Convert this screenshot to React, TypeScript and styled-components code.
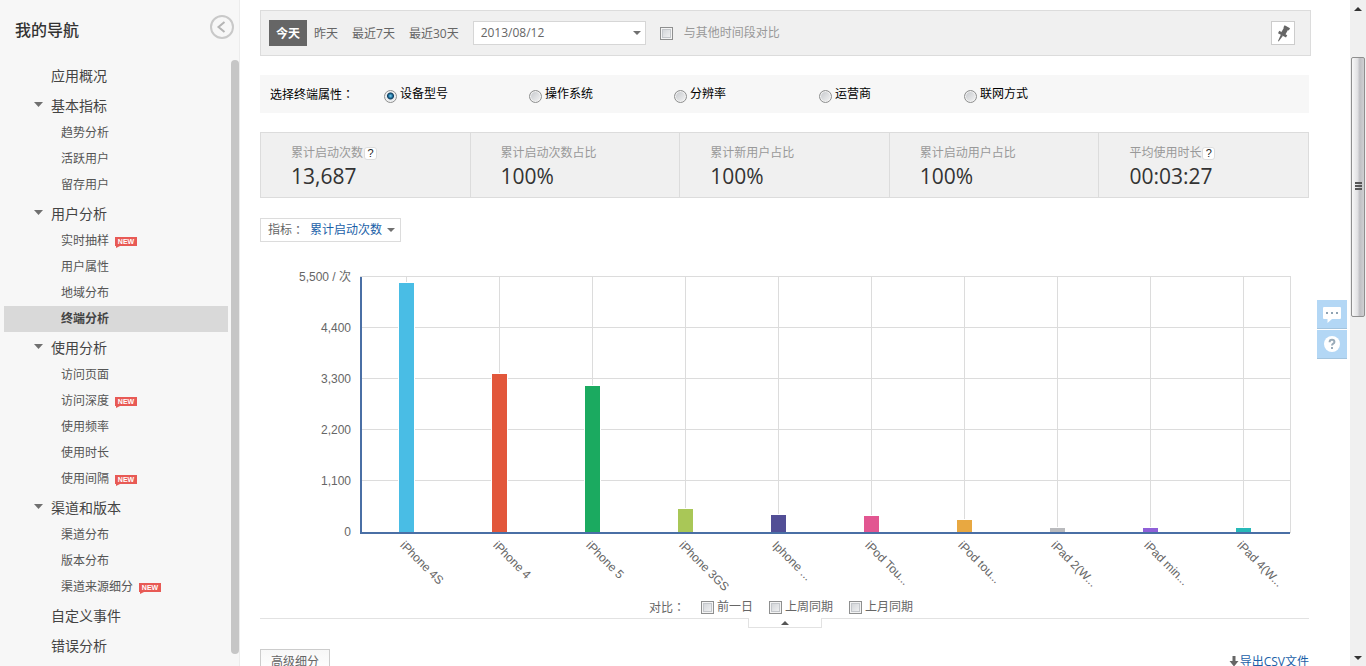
import React, { useState } from 'react';
import styled, { createGlobalStyle } from 'styled-components';

const FONT = '"Open Sans", "Noto Sans CJK SC", sans-serif';
const CHART_FONT = '"Liberation Sans", "Noto Sans CJK SC", sans-serif';

const GlobalStyle = createGlobalStyle`
  *, *::before, *::after { box-sizing: border-box; }
  body { margin: 0; background: #fff; color: #666; font: 12px/18px ${FONT}; }
  button, select, input { font: inherit; color: inherit; margin: 0; }
  a { text-decoration: none; color: inherit; }
  ul { list-style: none; margin: 0; padding: 0; }
`;

const Page = styled.div`
  display: flex;
  height: 100vh;
  overflow: hidden;
`;

/* Sidebar */
const Sidebar = styled.aside`
  flex: 0 0 240px;
  display: flex;
  flex-direction: column;
  background: #f7f7f7;
  border-right: 1px solid #ececec;
`;

const SidebarHead = styled.header`
  flex: 0 0 60px;
  display: flex;
  align-items: flex-start;
  justify-content: space-between;
  padding: 15px 5px 0 15px;
`;

const SidebarTitle = styled.h1`
  margin: 3px 0 0;
  font-size: 16px;
  line-height: 24px;
  font-weight: 500;
  color: #333;
`;

const IconButton = styled.button`
  display: block;
  padding: 0;
  border: 0;
  background: none;
  line-height: 0;
  cursor: pointer;
`;

const SidebarBody = styled.div`
  flex: 1;
  display: flex;
  justify-content: space-between;
  min-height: 0;
`;

const Nav = styled.nav`
  flex: 1;
  padding: 0 2px 0 4px;
  overflow: hidden;
`;

const GroupLink = styled.a`
  display: flex;
  align-items: center;
  height: 30px;
  padding: 2px 0 0 30px;
  font-size: 14px;
  color: #444;
`;

const Caret = styled.svg`
  flex: none;
  display: block;
  width: 9px;
  height: 5px;
  fill: #707070;
`;

const CaretSlot = styled.span`
  width: 17px;
  height: 8px;
`;

const SubLink = styled.a<{ $active?: boolean }>`
  display: flex;
  align-items: center;
  gap: 6px;
  height: 26px;
  margin-right: 1px;
  padding-left: 57px;
  color: ${(p) => (p.$active ? '#444' : '#555')};
  font-weight: ${(p) => (p.$active ? 700 : 400)};
  background: ${(p) => (p.$active ? '#d9d9d9' : 'transparent')};
`;

const Badge = styled.span`
  position: relative;
  width: 22px;
  height: 9px;
  background: #e85a55;
  color: #fff;
  font: 700 7px/9px "Liberation Sans", sans-serif;
  text-align: center;
  &::after {
    content: '';
    position: absolute;
    left: 1px;
    top: 9px;
    border-top: 2px solid #e85a55;
    border-right: 4px solid transparent;
  }
`;

const NavThumb = styled.div`
  flex: none;
  width: 8px;
  margin-bottom: 12px;
  border-radius: 4px;
  background: #c6c6c6;
`;

/* Main column */
const Main = styled.main`
  flex: 1;
  min-width: 0;
  padding: 10px 41px 0 20px;
`;

/* Full-width colon set in the middle of its cell */
const Colon = styled.span`
  font-family: "Noto Sans CJK TC", sans-serif;
`;

const Toolbar = styled.div`
  display: flex;
  align-items: center;
  height: 46px;
  margin-right: -2px;
  padding: 0 15px 0 8px;
  border: 1px solid #dcdcdc;
  background: #f0f0f0;
`;

const RangeButton = styled.button<{ $active?: boolean }>`
  height: 26px;
  padding: 2px 7px 0;
  border: 0;
  background: ${(p) => (p.$active ? '#666' : 'transparent')};
  color: ${(p) => (p.$active ? '#fff' : '#666')};
  font-weight: ${(p) => (p.$active ? 700 : 400)};
  cursor: pointer;
`;

const SelectWrap = styled.span`
  display: inline-flex;
  align-items: center;
  position: relative;
`;

const SelectCaret = styled(Caret)`
  position: absolute;
  right: 5px;
  width: 8px;
  height: 4px;
  pointer-events: none;
`;

const DateSelect = styled.select`
  appearance: none;
  width: 173px;
  height: 24px;
  padding: 0 20px 0 7px;
  border: 1px solid #d6d6d6;
  border-radius: 0;
  background: #fff;
`;

const DateWrap = styled(SelectWrap)`
  margin: 0 14px 0 7px;
`;

const Check = styled.input`
  appearance: none;
  flex: none;
  width: 13px;
  height: 13px;
  border: 1px solid #8e8f8f;
  background: linear-gradient(135deg, #cdd0d4, #f6f6f6);
  box-shadow: inset 0 0 0 1px #f4f4f4, inset 0 0 0 2px #c4c7cb;
  &:checked { background: #3a7ca8; }
`;

const CompareLabel = styled.label`
  display: flex;
  align-items: center;
  gap: 11px;
  color: #999;
`;

const PinButton = styled.button`
  display: flex;
  align-items: center;
  justify-content: center;
  width: 24px;
  height: 24px;
  margin-left: auto;
  padding: 0;
  border: 1px solid #ccc;
  background: #fff;
  cursor: pointer;
`;

const AttributeBar = styled.fieldset`
  display: flex;
  align-items: center;
  height: 38px;
  min-width: 0;
  margin: 19px 0;
  padding: 0 10px;
  border: 0;
  background: #f7f7f7;
  color: #000;
`;

const AttributeTitle = styled.span`
  width: 114px;
`;

const RadioLabel = styled.label`
  display: flex;
  align-items: center;
  gap: 3px;
  width: 145px;
`;

const Radio = styled.input`
  appearance: none;
  flex: none;
  width: 13px;
  height: 13px;
  margin-top: 4px;
  border: 1px solid #8e8f8f;
  border-radius: 50%;
  background: linear-gradient(135deg, #c4c7cb, #f4f4f4);
  box-shadow: inset 0 0 0 1px #f2f2f2;
  &:checked {
    background: radial-gradient(circle at 50% 45%, #7fd3f2 0, #1f6f9c 2px, #123c5c 3px, #e8ecef 4px);
  }
`;

const Stats = styled.dl`
  display: flex;
  height: 66px;
  margin: 0;
  border: 1px solid #dcdcdc;
  background: #f0f0f0;
`;

const Stat = styled.div`
  flex: 1;
  padding: 11px 0 0 30px;
  border-right: 1px solid #dcdcdc;
  &:last-child { border-right: 0; }
`;

const StatName = styled.dt`
  display: flex;
  align-items: center;
  color: #999;
`;

const StatValue = styled.dd`
  margin: 0;
  font-size: 21px;
  line-height: 28px;
  color: #333;
`;

const Help = styled.button`
  width: 13px;
  height: 13px;
  margin-left: 1px;
  padding: 0;
  border: 1px solid #ddd;
  border-radius: 3px;
  background: #fff;
  color: #222;
  font: 11px/11px "Liberation Sans", sans-serif;
`;

const MetricBox = styled.label`
  display: inline-flex;
  align-items: center;
  height: 24px;
  margin-top: 20px;
  padding-left: 7px;
  border: 1px solid #dcdcdc;
`;

const MetricSelect = styled.select`
  appearance: none;
  width: 90px;
  height: 22px;
  margin-left: 6px;
  padding: 0;
  border: 0;
  background: transparent;
  color: #1b5fa8;
`;

const ChartArea = styled.figure`
  margin: 34px 19px 0 100px;
`;

const ChartSvg = styled.svg`
  display: block;
  width: 100%;
  height: 321px;
  overflow: visible;
  font: 12px ${CHART_FONT};
  fill: #666;
`;

const CompareRow = styled.div`
  display: flex;
  align-items: center;
  justify-content: center;
  gap: 16px;
  height: 20px;
  padding-right: 7px;
`;

const OptionLabel = styled.label`
  display: flex;
  align-items: center;
  gap: 3px;
`;

const Divider = styled.div`
  display: flex;
  height: 10px;
  margin-top: 1px;
`;

const Rule = styled.span`
  flex: 1;
  border-top: 1px solid #e2e2e2;
`;

const FoldButton = styled.button`
  display: flex;
  align-items: center;
  justify-content: center;
  width: 74px;
  padding: 0;
  border: 1px solid #e2e2e2;
  border-top: 0;
  background: #fff;
`;

const FooterBar = styled.div`
  display: flex;
  align-items: flex-start;
  justify-content: space-between;
  margin-top: 21px;
`;

const SegmentButton = styled.button`
  width: 70px;
  height: 25px;
  padding: 0;
  border: 1px solid #ccc;
  background: linear-gradient(#f7f7f7, #fff);
`;

const ExportLink = styled.a`
  display: flex;
  align-items: center;
  gap: 1px;
  height: 25px;
  color: #1b5fa8;
`;

/* Window edge */
const Scrollbar = styled.div`
  flex: 0 0 16px;
  display: flex;
  flex-direction: column;
  align-items: center;
  padding: 7px 1px 6px;
  background: #f0f0f0;
`;

const ScrollThumb = styled.div`
  display: flex;
  align-items: center;
  justify-content: center;
  align-self: stretch;
  height: 39vh;
  margin: 46px 0 auto;
  border: 1px solid #8f8f8f;
  border-radius: 2px;
  background: linear-gradient(90deg, #f8f8f8, #e2e2e4 45%, #bfbfc3 65%, #d0d0d2);
`;

const FloatTools = styled.div`
  position: fixed;
  right: 19px;
  top: 300px;
  display: flex;
  flex-direction: column;
  gap: 1px;
`;

const FloatButton = styled.button`
  display: flex;
  align-items: center;
  justify-content: center;
  width: 30px;
  height: 29px;
  padding: 0;
  border: 0;
  border-bottom: 1px solid #a3c4de;
  background: #b3d7f5;
`;

type Item = { text: string; isNew?: boolean };
type Group = { text: string; items?: Item[] };

const NAV: Group[] = [
  { text: '应用概况' },
  { text: '基本指标', items: [{ text: '趋势分析' }, { text: '活跃用户' }, { text: '留存用户' }] },
  {
    text: '用户分析',
    items: [{ text: '实时抽样', isNew: true }, { text: '用户属性' }, { text: '地域分布' }, { text: '终端分析' }],
  },
  {
    text: '使用分析',
    items: [
      { text: '访问页面' },
      { text: '访问深度', isNew: true },
      { text: '使用频率' },
      { text: '使用时长' },
      { text: '使用间隔', isNew: true },
    ],
  },
  { text: '渠道和版本', items: [{ text: '渠道分布' }, { text: '版本分布' }, { text: '渠道来源细分', isNew: true }] },
  { text: '自定义事件' },
  { text: '错误分析' },
];

const RANGES = ['今天', '昨天', '最近7天', '最近30天'];
const ATTRIBUTES = ['设备型号', '操作系统', '分辨率', '运营商', '联网方式'];
const PERIODS = ['前一日', '上周同期', '上月同期'];

const STATS = [
  { name: '累计启动次数', value: '13,687', help: true },
  { name: '累计启动次数占比', value: '100%' },
  { name: '累计新用户占比', value: '100%' },
  { name: '累计启动用户占比', value: '100%' },
  { name: '平均使用时长', value: '00:03:27', help: true },
];

const DEVICES = [
  { name: 'iPhone 4S', value: 5370, color: '#49bde5' },
  { name: 'iPhone 4', value: 3400, color: '#e2573b' },
  { name: 'iPhone 5', value: 3150, color: '#1baa60' },
  { name: 'iPhone 3GS', value: 500, color: '#a9c757' },
  { name: 'Iphone ...', value: 370, color: '#524e96' },
  { name: 'iPod Tou...', value: 350, color: '#e25691' },
  { name: 'iPod tou...', value: 260, color: '#e8a841' },
  { name: 'iPad 2(W...', value: 95, color: '#b9babd' },
  { name: 'iPad min...', value: 95, color: '#8f60d8' },
  { name: 'iPad 4(W...', value: 95, color: '#27b9b8' },
];

const TICKS = ['5,500 / 次', '4,400', '3,300', '2,200', '1,100', '0'];
const STEP = 51;
const AXIS_Y = STEP * 5 + 2;
const BASE_Y = AXIS_Y - 1;

function DownCaret() {
  return (
    <Caret viewBox="0 0 9 5">
      <path d="M0 0H9L4.5 5Z" />
    </Caret>
  );
}

function Chart() {
  return (
    <ChartSvg role="img" aria-label="累计启动次数">
      <g stroke="#dcdcdc" shapeRendering="crispEdges">
        {TICKS.slice(0, 5).map((t, i) => (
          <line key={t} x1="0" x2="100%" y1={i * STEP + 0.5} y2={i * STEP + 0.5} />
        ))}
        <line x1="100%" x2="100%" y1="0" y2={AXIS_Y} />
      </g>
      {TICKS.map((t, i) => (
        <text key={t} x="-9" y={i * STEP + 5} textAnchor="end">
          {t}
        </text>
      ))}
      {DEVICES.map((d, i) => {
        const h = Math.round((d.value / 5500) * STEP * 5);
        return (
          <svg key={d.name} x={`${i * 10 + 5}%`} overflow="visible">
            <line x1="0" x2="0" y1="0" y2={BASE_Y} stroke="#dcdcdc" shapeRendering="crispEdges" />
            <rect x="-9" y={BASE_Y - h - 1} width="17" height={h + 1} fill="#fff" shapeRendering="crispEdges" />
            <rect x="-8" y={BASE_Y - h} width="15" height={h} fill={d.color} shapeRendering="crispEdges" />
            <text transform={`translate(-7 ${BASE_Y + 14}) rotate(45)`}>{d.name}</text>
          </svg>
        );
      })}
      <g stroke="#4a6fa5" strokeWidth="2">
        <line x1="1" x2="1" y1="1" y2={AXIS_Y} />
        <line x1="0" x2="100%" y1={AXIS_Y} y2={AXIS_Y} />
      </g>
    </ChartSvg>
  );
}

export default function App() {
  const [range, setRange] = useState('今天');
  const [attribute, setAttribute] = useState('设备型号');

  return (
    <Page>
      <GlobalStyle />
      <Sidebar>
        <SidebarHead>
          <SidebarTitle>我的导航</SidebarTitle>
          <IconButton aria-label="收起导航">
            <svg width="24" height="24" viewBox="0 0 24 24" fill="none" stroke="#c9c9c9" strokeWidth="2">
              <circle cx="12" cy="12" r="11" />
              <path d="M14.5 7L8.5 12L14.5 17" stroke="#b5b5b5" />
            </svg>
          </IconButton>
        </SidebarHead>
        <SidebarBody>
          <Nav>
            <ul>
              {NAV.map((g) => (
                <li key={g.text}>
                  <GroupLink href="#">
                    <CaretSlot>{g.items && <DownCaret />}</CaretSlot>
                    {g.text}
                  </GroupLink>
                  {g.items && (
                    <ul>
                      {g.items.map((s) => (
                        <li key={s.text}>
                          <SubLink href="#" $active={s.text === '终端分析'}>
                            {s.text}
                            {s.isNew && <Badge>NEW</Badge>}
                          </SubLink>
                        </li>
                      ))}
                    </ul>
                  )}
                </li>
              ))}
            </ul>
          </Nav>
          <NavThumb />
        </SidebarBody>
      </Sidebar>

      <Main>
        <Toolbar>
          {RANGES.map((r) => (
            <RangeButton key={r} $active={r === range} onClick={() => setRange(r)}>
              {r}
            </RangeButton>
          ))}
          <DateWrap>
            <DateSelect aria-label="日期">
              <option>2013/08/12</option>
            </DateSelect>
            <SelectCaret viewBox="0 0 8 4">
              <path d="M0 0H8L4 4Z" />
            </SelectCaret>
          </DateWrap>
          <CompareLabel>
            <Check type="checkbox" />
            与其他时间段对比
          </CompareLabel>
          <PinButton aria-label="固定">
            <svg width="16" height="18" viewBox="0 0 16 18" fill="none" stroke="#666">
              <path d="M9 2.4L14.4 5.4" strokeWidth="2.6" />
              <path d="M11.2 4.4L8 10" strokeWidth="4.6" />
              <path d="M3.6 8L11.6 12.4" strokeWidth="2.6" />
              <path d="M5.9 10.6L8 11.8L3.6 17.4L3 17Z" fill="#666" stroke="none" />
            </svg>
          </PinButton>
        </Toolbar>

        <AttributeBar>
          <AttributeTitle>
            选择终端属性<Colon>：</Colon>
          </AttributeTitle>
          {ATTRIBUTES.map((a) => (
            <RadioLabel key={a}>
              <Radio type="radio" name="attribute" checked={a === attribute} onChange={() => setAttribute(a)} />
              {a}
            </RadioLabel>
          ))}
        </AttributeBar>

        <Stats>
          {STATS.map((s) => (
            <Stat key={s.name}>
              <StatName>
                {s.name}
                {s.help && <Help aria-label="说明">?</Help>}
              </StatName>
              <StatValue>{s.value}</StatValue>
            </Stat>
          ))}
        </Stats>

        <MetricBox>
          指标<Colon>：</Colon>
          <SelectWrap>
            <MetricSelect>
              <option>累计启动次数</option>
            </MetricSelect>
            <SelectCaret viewBox="0 0 8 4">
              <path d="M0 0H8L4 4Z" />
            </SelectCaret>
          </SelectWrap>
        </MetricBox>

        <ChartArea>
          <Chart />
        </ChartArea>

        <CompareRow>
          <span>
            对比<Colon>：</Colon>
          </span>
          {PERIODS.map((p) => (
            <OptionLabel key={p}>
              <Check type="checkbox" />
              {p}
            </OptionLabel>
          ))}
        </CompareRow>

        <Divider>
          <Rule />
          <FoldButton aria-label="收起图表">
            <svg width="8" height="4" viewBox="0 0 8 4" fill="#555">
              <path d="M0 4H8L4 0Z" />
            </svg>
          </FoldButton>
          <Rule />
        </Divider>

        <FooterBar>
          <SegmentButton>高级细分</SegmentButton>
          <ExportLink href="#">
            <svg width="10" height="11" viewBox="0 0 10 11" fill="#666">
              <path d="M3.5 0H6.5V5H9.5L5 10.5L0.5 5H3.5Z" />
            </svg>
            导出CSV文件
          </ExportLink>
        </FooterBar>
      </Main>

      <FloatTools>
        <FloatButton aria-label="反馈">
          <svg width="20" height="18" viewBox="0 0 20 18">
            <path d="M2 2H18Q19 2 19 3V13Q19 14 18 14H10L5.5 18V14H2Q1 14 1 13V3Q1 2 2 2Z" fill="#fff" />
            <path d="M4 7h2v2h-2zM9 7h2v2h-2zM14 7h2v2h-2z" fill="#8fa3b3" />
          </svg>
        </FloatButton>
        <FloatButton aria-label="帮助">
          <svg width="18" height="18" viewBox="0 0 18 18" fill="none">
            <circle cx="9" cy="9" r="8" fill="#fff" />
            <path d="M6.6 7.2Q6.6 4.8 9 4.8Q11.4 4.8 11.4 6.9Q11.4 8 10.2 8.7Q9 9.4 9 10.6" stroke="#9aabb8" strokeWidth="2" />
            <path d="M8 12h2v2h-2z" fill="#9aabb8" />
          </svg>
        </FloatButton>
      </FloatTools>

      <Scrollbar aria-hidden="true">
        <svg width="8" height="4" viewBox="0 0 8 4" fill="#333">
          <path d="M0 4H8L4 0Z" />
        </svg>
        <ScrollThumb>
          <svg width="7" height="9" viewBox="0 0 7 9" fill="#555">
            <path d="M0 0h7v2h-7zM0 3h7v2h-7zM0 6h7v2h-7z" />
          </svg>
        </ScrollThumb>
        <svg width="8" height="4" viewBox="0 0 8 4" fill="#333">
          <path d="M0 0H8L4 4Z" />
        </svg>
      </Scrollbar>
    </Page>
  );
}
